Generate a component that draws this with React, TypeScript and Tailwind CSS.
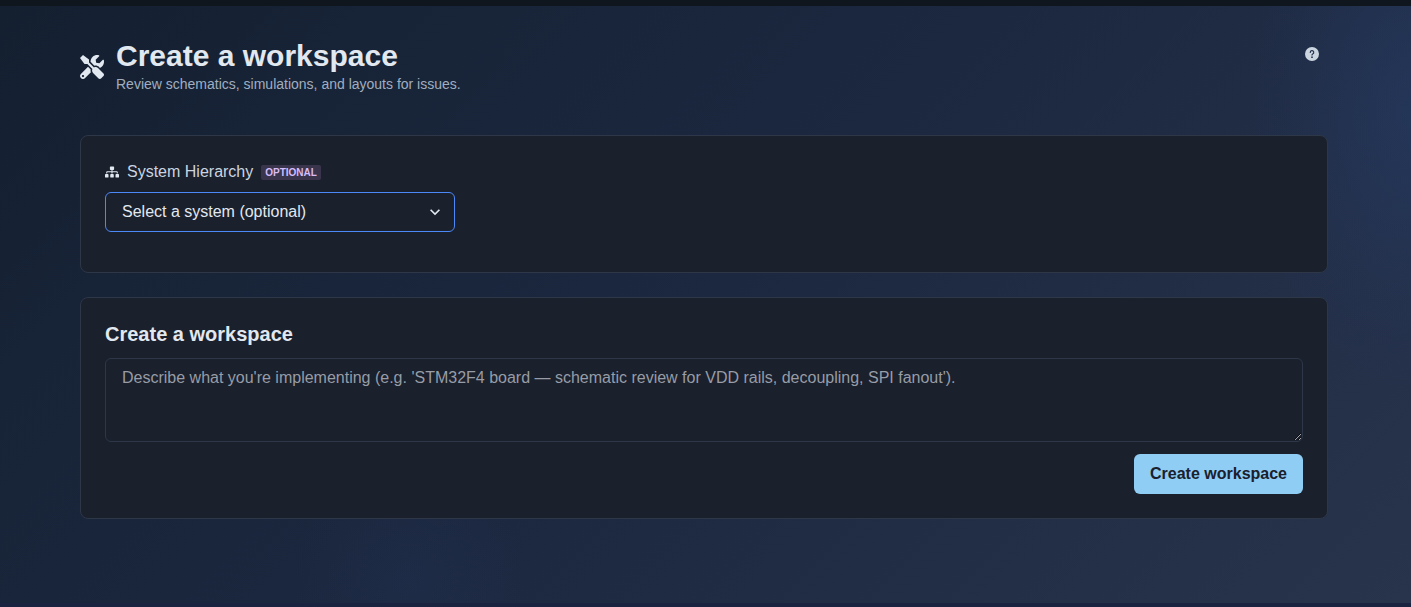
import { useState } from "react";
import { FaSitemap, FaTools } from "react-icons/fa";

function ChevronDown() {
  return (
    <svg viewBox="0 0 24 24" className="h-5 w-5" fill="currentColor" aria-hidden="true">
      <path d="M16.59 8.59L12 13.17 7.41 8.59 6 10l6 6 6-6z" />
    </svg>
  );
}

function QuestionIcon() {
  return (
    <svg viewBox="0 0 24 24" className="h-3.5 w-3.5" fill="currentColor" aria-hidden="true">
      <path d="M12,0A12,12,0,1,0,24,12,12.013,12.013,0,0,0,12,0Zm0,19a1.5,1.5,0,1,1,1.5-1.5A1.5,1.5,0,0,1,12,19Zm1.6-6.08a1,1,0,0,0-.6.917,1,1,0,1,1-2,0,3,3,0,0,1,1.8-2.75A2,2,0,1,0,10,9.255a1,1,0,1,1-2,0,4,4,0,1,1,5.6,3.666Z" />
    </svg>
  );
}

function PageHeader() {
  return (
    <header className="flex items-start justify-between">
      <div className="flex items-center gap-3">
        <FaTools className="h-6 w-6 text-[#e2e8f0]" aria-hidden="true" />
        <div className="pb-0.5">
          <h1 className="text-3xl leading-9 font-bold text-[#e2e8f0]">Create a workspace</h1>
          <p className="text-sm leading-5 text-[#a0aec0]">
            Review schematics, simulations, and layouts for issues.
          </p>
        </div>
      </div>
      <button
        type="button"
        aria-label="Help"
        className="flex h-8 w-8 items-center justify-center rounded-md text-[#cbd5e0] hover:bg-white/10"
      >
        <QuestionIcon />
      </button>
    </header>
  );
}

function SystemCard() {
  const [system, setSystem] = useState("");

  return (
    <section className="rounded-lg border border-[#2d3748] bg-[#1a202c] px-6 pt-6 pb-10">
      <div className="mb-2 flex items-center gap-2">
        <FaSitemap className="h-3.5 w-3.5 text-[#e2e8f0]" aria-hidden="true" />
        <label htmlFor="system" className="text-base leading-6 text-[#cbd5e0]">
          System Hierarchy
        </label>
        <span className="rounded-xs bg-[#3a344c] px-1 text-[10px] leading-[15px] font-bold text-[#d6bcfa] uppercase">
          Optional
        </span>
      </div>
      <div className="relative max-w-[350px]">
        <select
          id="system"
          value={system}
          onChange={(e) => setSystem(e.target.value)}
          className="h-10 w-full appearance-none rounded-md border border-[#4d88f8] bg-transparent pr-8 pl-4 text-base text-[#e2e8f0] outline-none"
        >
          <option value="">Select a system (optional)</option>
        </select>
        <div className="pointer-events-none absolute inset-y-0 right-2 flex w-6 items-center justify-center text-[#e2e8f0]">
          <ChevronDown />
        </div>
      </div>
    </section>
  );
}

function WorkspaceCard() {
  const [description, setDescription] = useState("");

  return (
    <section className="rounded-lg border border-[#2d3748] bg-[#1a202c] p-6">
      <form onSubmit={(e) => e.preventDefault()} className="flex flex-col gap-3">
        <h2 className="text-xl leading-6 font-bold text-[#e2e8f0]">
          <label htmlFor="description">Create a workspace</label>
        </h2>
        <textarea
          id="description"
          value={description}
          onChange={(e) => setDescription(e.target.value)}
          placeholder="Describe what you're implementing (e.g. 'STM32F4 board — schematic review for VDD rails, decoupling, SPI fanout')."
          className="block h-21 w-full resize-y rounded-md border border-[#2d3748] bg-transparent px-4 py-2 text-base leading-[22px] text-[#e2e8f0] outline-none placeholder:text-[#979ca6]"
        />
        <div className="flex justify-end">
          <button
            type="submit"
            className="h-10 rounded-md bg-[#90cdf4] px-4 text-base font-bold text-[#1a202c] hover:bg-[#63b3ed]"
          >
            Create workspace
          </button>
        </div>
      </form>
    </section>
  );
}

export default function App() {
  return (
    <div className="flex min-h-screen flex-col bg-[#10161e] font-['Liberation_Sans',Arial,sans-serif]">
      <div className="h-1.5" />
      <main className="flex-1 border-b-4 border-[#1a2440] bg-[radial-gradient(circle_at_29%_96%,#2a3c6430,transparent_10%),radial-gradient(160px_280px_at_100%_18%,#26406f70,transparent),linear-gradient(135deg,#142030_0%,#1c2840_50%,#28334c_100%)] pr-[83px] pl-20 pt-8">
        <div className="flex flex-col gap-6">
          <div className="pb-[15px]">
            <PageHeader />
          </div>
          <SystemCard />
          <WorkspaceCard />
        </div>
      </main>
    </div>
  );
}
